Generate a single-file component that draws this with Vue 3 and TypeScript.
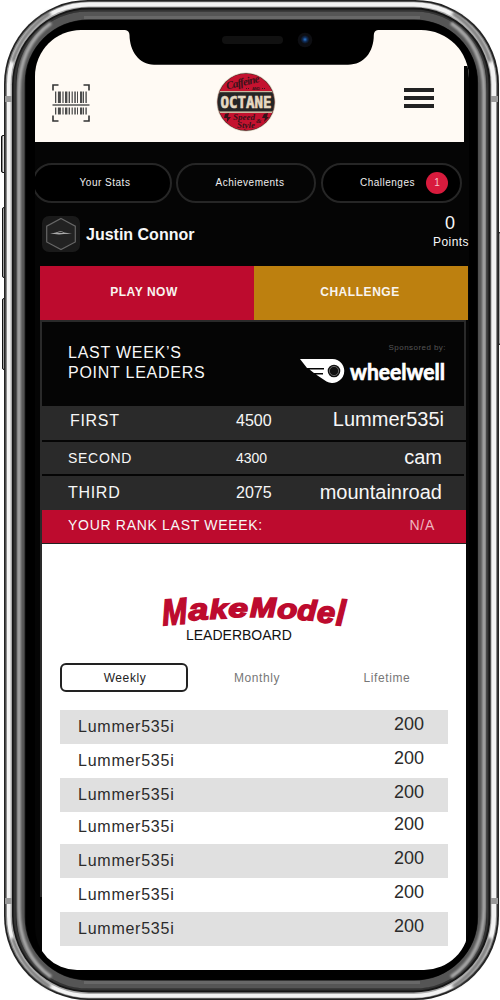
<script setup lang="ts">
interface Leader { place: string; score: number; name: string; cls: string }
interface Glyph { c: string; x: number; y: number; size: number; w: number; rot: number }

const leaders: Leader[] = [
  { place: 'FIRST', score: 4500, name: 'Lummer535i', cls: 'first' },
  { place: 'SECOND', score: 4300, name: 'cam', cls: 'second' },
  { place: 'THIRD', score: 2075, name: 'mountainroad', cls: 'third' },
]
const board = Array.from({ length: 7 }, () => ({ name: 'Lummer535i', score: 200 }))

// Wordmark letters: baseline position, size, drawn width and tilt
const wordmark: Glyph[] = [
  { c: 'M', x: 13, y: 40.5, size: 37, w: 25, rot: -5 },
  { c: 'a', x: 39, y: 35.5, size: 30, w: 20, rot: -4 },
  { c: 'k', x: 60, y: 34, size: 27, w: 18, rot: -3 },
  { c: 'e', x: 78.5, y: 32, size: 25, w: 19.5, rot: -1 },
  { c: 'M', x: 100, y: 31.5, size: 27, w: 26, rot: 0 },
  { c: 'o', x: 127, y: 33, size: 27, w: 20, rot: 2 },
  { c: 'd', x: 147, y: 34.5, size: 28, w: 19, rot: 3 },
  { c: 'e', x: 166.5, y: 37, size: 30, w: 18, rot: 4 },
  { c: 'l', x: 185.5, y: 40, size: 36, w: 9, rot: 4 },
]
const bars = [0, 2.9, 7.4, 10, 13.6, 16.6, 19.3, 22, 25, 28, 30.4]
const barW = [1.3, 3, 1.2, 2.4, 1.4, 1.2, 1.5, 1, 2.4, 1, 1.4]
</script>

<template>
  <main class="page">
    <svg class="device" width="500" height="1000" viewBox="0 0 500 1000" aria-hidden="true">
      <defs>
        <linearGradient id="btn" x1="0" x2="1" y1="0" y2="0">
          <stop offset="0" stop-color="#333" /><stop offset=".4" stop-color="#e4e4e4" /><stop offset="1" stop-color="#888" />
        </linearGradient>
        <radialGradient id="lens"><stop offset="0" stop-color="#2878d0" /><stop offset=".5" stop-color="#102b55" /><stop offset="1" stop-color="#0b0c10" /></radialGradient>
        <filter id="soft" x="-20%" y="-20%" width="140%" height="140%"><feGaussianBlur stdDeviation="1.6" /></filter>
        <filter id="slight" x="-5" width="11" y="-.1" height="1.2"><feGaussianBlur stdDeviation=".8" /></filter>
      </defs>
      <g fill="url(#btn)" stroke="#111" stroke-width="1">
        <rect x="1.5" y="135.5" width="5" height="37" rx="1.5" />
        <rect x="2.5" y="207.5" width="4" height="70" rx="1.5" />
        <rect x="2.5" y="298.5" width="4" height="71" rx="1.5" />
        <rect x="495.5" y="232.5" width="5" height="112" rx="1.5" />
      </g>
      <g fill="none">
        <rect x="4" y="0" width="495" height="1000" rx="84" fill="#222" />
        <rect x="5.6" y="1.4" width="491.6" height="997" rx="83" fill="#8c8c8c" />
        <rect x="7" y="2.2" width="489" height="995.6" rx="82" fill="#f3f3f3" />
        <path d="M13 62Q22 32 50 13M490 62Q481 32 453 13M13 938Q22 968 50 987M490 938Q481 968 453 987" stroke="#555" stroke-opacity=".75" stroke-width="5" filter="url(#soft)" />
        <rect x="10.600" y="6.400" width="481" height="987.600" rx="78" fill="#aaa" />
        <rect x="12" y="7.600" width="478.600" height="985" rx="77" fill="#161616" />
        <rect x="13.600" y="9.600" width="475" height="981" rx="75" fill="#333" />
        <rect x="15.800" y="11.400" width="471" height="977" rx="73" fill="#171717" />
        <rect x="20.600" y="15.500" width="461.500" height="969" rx="68" stroke="#555" stroke-width="8" />
        <path d="M51 23C30 38 19 62 19 92V908C19 938 30 962 51 977M451 23C473 38 484 62 484 92V908C484 938 473 962 451 977" stroke="#aaa" stroke-width="3.500" filter="url(#slight)" />
        <path d="M84 17.500H420M84 982.500H420" stroke="#686868" stroke-width="3" />
        <rect x="25.500" y="20" width="452" height="960" rx="62" fill="#000" />
        <path d="M5 96H12V102H5ZM491 96H498V102H491ZM5 898H12V904H5ZM491 898H498V904H491Z" fill="#999" />
      </g>
    </svg>

    <section class="screen">
      <header class="top">
        <svg class="scan" width="38" height="38" viewBox="0 0 38 38" aria-label="Scan">
          <path d="M1 6.500V1H6.500M31.500 1H37V6.500M1 31.500V37H6.500M31.500 37H37V31.500" fill="none" stroke="#333" stroke-width="1.600" />
          <path d="M.5 21H37.500" stroke="#555" stroke-width="1.500" />
          <g fill="#4b4b4b">
            <rect v-for="(b, i) in bars" :key="i" :x="b + 3" y="7.500" :width="barW[i]" height="11.500" />
            <rect v-for="(b, i) in bars" :key="'b' + i" :x="b + 3" y="23.500" :width="barW[i]" height="7" />
          </g>
        </svg>
        <svg class="octane" width="60" height="60" viewBox="0 0 60 60" aria-label="Caffeine and Octane">
          <defs><clipPath id="disc"><circle cx="30" cy="30" r="28.300" /></clipPath></defs>
          <circle cx="30" cy="30" r="29.500" fill="#d9cdbb" />
          <circle cx="30" cy="30" r="28.700" fill="#3a2020" />
          <g clip-path="url(#disc)">
            <rect width="60" height="60" fill="#c4122f" />
            <rect y="19" width="60" height="22" fill="#c9b79f" />
            <rect y="20.200" width="60" height="19.200" fill="#252525" />
          </g>
          <text class="script" transform="translate(11 17.500) rotate(-13)" font-size="11" textLength="34">Caffeine</text>
          <text class="tiny" x="36" y="18" textLength="8">AND</text>
          <path d="M30 16.500H34M46 16.500H49" stroke="#39181c" stroke-dasharray="1 1" />
          <text class="slab" x="4.500" y="35.500" textLength="51" lengthAdjust="spacingAndGlyphs">OCTANE</text>
          <text class="script" x="17" y="47.500" font-size="9" textLength="22">Speed</text>
          <text class="script" x="21" y="56" font-size="9" textLength="18">Style</text>
          <text class="script" x="40" y="50.500" font-size="7">&amp;</text>
          <path d="M9 42L13 41 12 45 15 45 11 50 11 46 8 46ZM48 42L52 41 51 45 53 45 48 50 49 46 46 46Z" fill="#35131a" />
        </svg>
        <div class="menu"><i /><i /><i /></div>
      </header>

      <nav class="pills">
        <a class="pill stats">Your Stats</a>
        <a class="pill achv">Achievements</a>
        <a class="pill chal"><span>Challenges</span><b>1</b></a>
      </nav>

      <section class="user">
        <div class="avatar">
          <svg width="38" height="36" viewBox="0 0 38 36">
            <path d="M19 2.500L33.300 10.200V26L19 33.500 4.700 26V10.200Z" fill="#222" stroke="#666" stroke-width="1.200" />
            <path d="M8 17.600L13 16.800 17 15.400Q20 15 22 16.600L30 17.700 22 18 17 18.600Z" fill="#aaa" />
            <path d="M14.500 16.800L17.500 15.900H20L21.500 16.900Z" fill="#222" />
          </svg>
        </div>
        <strong>Justin Connor</strong>
        <div class="points"><span>0</span><small>Points</small></div>
      </section>

      <div class="cta"><button class="play">PLAY NOW</button><button class="challenge">CHALLENGE</button></div>

      <section class="panel">
        <div class="intro">
          <h2>LAST WEEK’S<br />POINT LEADERS</h2>
          <div class="sponsor">
            <small>Sponsored by:</small>
            <svg width="148" height="28" viewBox="0 0 148 28">
              <path d="M1 2H33.500A12 12 0 1 1 27.500 24.500L17 17.500H24V16H15L10.500 12.500H25V11H8Z" fill="#fff" />
              <circle cx="35" cy="14" r="5.500" fill="#111" stroke="#111" stroke-width="1.600" />
              <circle cx="35" cy="14" r="4.600" fill="none" stroke="#888" stroke-width=".7" />
              <text class="ww" x="51" y="22.500" textLength="95" lengthAdjust="spacingAndGlyphs">wheelwell</text>
            </svg>
          </div>
        </div>
        <div v-for="l in leaders" :key="l.place" class="leader" :class="l.cls">
          <span>{{ l.place }}</span><em>{{ l.score }}</em><b>{{ l.name }}</b>
        </div>
        <div class="rank"><span>YOUR RANK LAST WEEEK:</span><em>N/A</em></div>

        <div class="board">
          <svg class="wordmark" width="210" height="46" viewBox="0 0 210 46">
            <g v-for="(g, i) in wordmark" :key="i" :transform="`translate(${g.x} ${g.y}) rotate(${g.rot})`">
              <text class="mm" :font-size="g.size" :textLength="g.w" lengthAdjust="spacingAndGlyphs">{{ g.c }}</text>
            </g>
          </svg>
          <h3>LEADERBOARD</h3>
          <div class="tabs"><span class="on">Weekly</span><span>Monthly</span><span>Lifetime</span></div>
          <ul>
            <li v-for="(r, i) in board" :key="i"><span>{{ r.name }}</span><em>{{ r.score }}</em></li>
          </ul>
        </div>
      </section>
    </section>

    <svg class="notch" width="260" height="40" viewBox="0 0 260 40" aria-hidden="true">
      <path d="M0 0H260V4H257Q253 4.500 252.800 9C252.800 26 243 38.700 227 38.700H33C18 38.700 8.700 25 8.500 9Q8.300 4.500 4 4H0Z" fill="#000" />
      <rect x="101" y="10" width="61" height="8" rx="4" fill="#111" />
      <circle cx="184" cy="14" r="7.300" fill="#0d0e12" />
      <circle cx="184" cy="13.500" r="4.500" fill="url(#lens)" />
    </svg>
  </main>
</template>

<style>
body { background: #fff; }
</style>

<style scoped>
* { box-sizing: border-box; }
.page { position: relative; width: 500px; height: 1000px; overflow: hidden; font-family: "Liberation Sans", Arial, sans-serif; color: #f7f7f7; }
.device { position: absolute; inset: 0; }
.notch { position: absolute; left: 121px; top: 26px; }
em, b { font-style: normal; font-weight: 400; }
h2, h3, ul { margin: 0; padding: 0; font-weight: 400; list-style: none; }
.screen { position: relative; margin: 0 0 0 35px; top: 30px; width: 434px; height: 940px; background: #050505; border-radius: 46px 48px 45px 42px; overflow: hidden; }
.top { height: 112px; display: flex; padding: 54px 0 0 17px; background: linear-gradient(to right, transparent 429px, #050505 429px) 0 36px no-repeat, #fffaf4; }
.octane { margin: -12px 0 0 126px; }
.menu { margin: 4px 0 0 128px; width: 30px; display: flex; flex-direction: column; gap: 4px; }
.menu i { height: 4px; background: #222; }
.script { font-family: "Liberation Serif", serif; font-style: italic; font-weight: 700; fill: #39131a; }
.tiny { font: 700 4px "Liberation Sans", sans-serif; fill: #39131a; }
.slab { font: 700 15px "DejaVu Sans Mono", monospace; fill: #e6d8c2; stroke: #e6d8c2; stroke-width: .6; }
.pills { display: flex; gap: 4px; margin: 21px 0 0 -3px; }
.pill { flex: none; width: 141px; height: 40px; border: 2px solid #262626; border-radius: 20px; display: flex; align-items: center; justify-content: center; font-size: 10px; letter-spacing: .5px; padding-bottom: 1px; color: #eee; }
.stats { background: #000; width: 140px; padding-left: 6px; }
.achv { padding-left: 8px; width: 140px; }
.chal { background: #000; justify-content: flex-end; padding-right: 12px; gap: 11px; margin-left: 1px; }
.chal b { width: 22px; height: 22px; border-radius: 50%; background: #d81b3d; display: grid; place-items: center; letter-spacing: 0; color: #f5c4cb; }
.user { display: flex; height: 63px; padding: 13px 0 0 7px; align-items: flex-start; }
.avatar { width: 38px; height: 36px; border-radius: 7px; background: #1a1a1a; }
.user strong { margin: 9px 0 0 6px; font-size: 16px; line-height: 20px; }
.points { margin-left: auto; width: 36px; display: flex; flex-direction: column; align-items: center; }
.points span { font-size: 18px; line-height: 20px; margin-top: -3px; margin-right: 2px; }
.points small { font-size: 12px; line-height: 16px; letter-spacing: .45px; margin-top: 1px; }
.cta { display: flex; margin-left: 5px; width: 428px; height: 54px; }
.cta button { border: 0; padding: 0 0 2px; color: #f8f4ef; font: 700 12px "Liberation Sans", Arial, sans-serif; letter-spacing: .55px; }
.cta .play { width: 214px; background: #bd0b2e; padding-right: 6px; }
.cta .challenge { width: 214px; background: #bd800f; padding-right: 2px; }
.panel { margin-left: 5px; width: 426px; height: 577px; border: 2px solid #2a2a2a; border-bottom: 0; }
.intro { height: 84px; display: flex; justify-content: space-between; padding: 21px 17px 0 26px; }
h2 { font-size: 16px; line-height: 20px; letter-spacing: .75px; white-space: nowrap; }
.sponsor { display: flex; flex-direction: column; align-items: flex-end; }
.sponsor small { font-size: 8px; line-height: 10px; letter-spacing: .45px; color: #555; margin-right: 1px; }
.sponsor svg { margin-top: 4px; overflow: visible; }
.ww { font: 700 23px Lato, sans-serif; fill: #fff; stroke: #fff; stroke-width: .7; }
.leader { display: flex; align-items: center; background: #2a2a2a; border-bottom: 2px solid #050505; padding: 0 22px 0 26px; }
.leader span { width: 168px; font-size: 16px; letter-spacing: .7px; }
.leader em { font-size: 16px; }
.leader b { margin-left: auto; font-size: 20px; line-height: 24px; padding-bottom: 2px; }
.first { height: 36px; padding: 0 22px 5px 28px; margin-right: -2px; }
.first span { width: 166px; }
.first b { padding-bottom: 3px; }
.second { height: 34px; }
.second span, .second em { font-size: 14px; }
.third { height: 34px; border: 0; }
.third b { padding-bottom: 3px; }
.rank { height: 34px; background: #bd0b2e; border-bottom: 1px solid #222; display: flex; justify-content: space-between; align-items: center; font-size: 14px; letter-spacing: .7px; padding: 0 31px 4px 26px; margin-right: -2px; }
.rank em { color: #efb5c0; }
.board { margin-right: -2px; height: 430px; background: #fff; padding-top: 41px; color: #222; }
.wordmark { display: block; margin-left: 108px; overflow: visible; }
.mm { font-family: "Liberation Sans", sans-serif; font-weight: 700; font-style: italic; fill: #bd0b2e; stroke: #bd0b2e; stroke-width: 1.600; }
h3 { font-size: 14px; line-height: 18px; color: #111; margin: -5px 0 0 144px; }
.tabs { display: flex; height: 29px; margin: 19px 18px 18px; font-size: 12px; letter-spacing: .6px; }
.tabs span { flex: none; width: 130px; display: grid; place-items: center; color: #777; padding-left: 8px; }
.tabs .on { width: 128px; border: 2px solid #222; border-radius: 6px; color: #222; padding-left: 2px; }
ul { margin: 0 18px; }
li { height: 34px; display: flex; align-items: center; justify-content: space-between; padding: 0 24px 0 18px; font-size: 16px; letter-spacing: .75px; color: #2b2b2b; }
li:nth-child(odd) { background: #e0e0e0; }
li:nth-child(4) { height: 32px; padding-bottom: 2px; }
li em { font-size: 18px; letter-spacing: 0; padding-bottom: 5px; }
</style>
